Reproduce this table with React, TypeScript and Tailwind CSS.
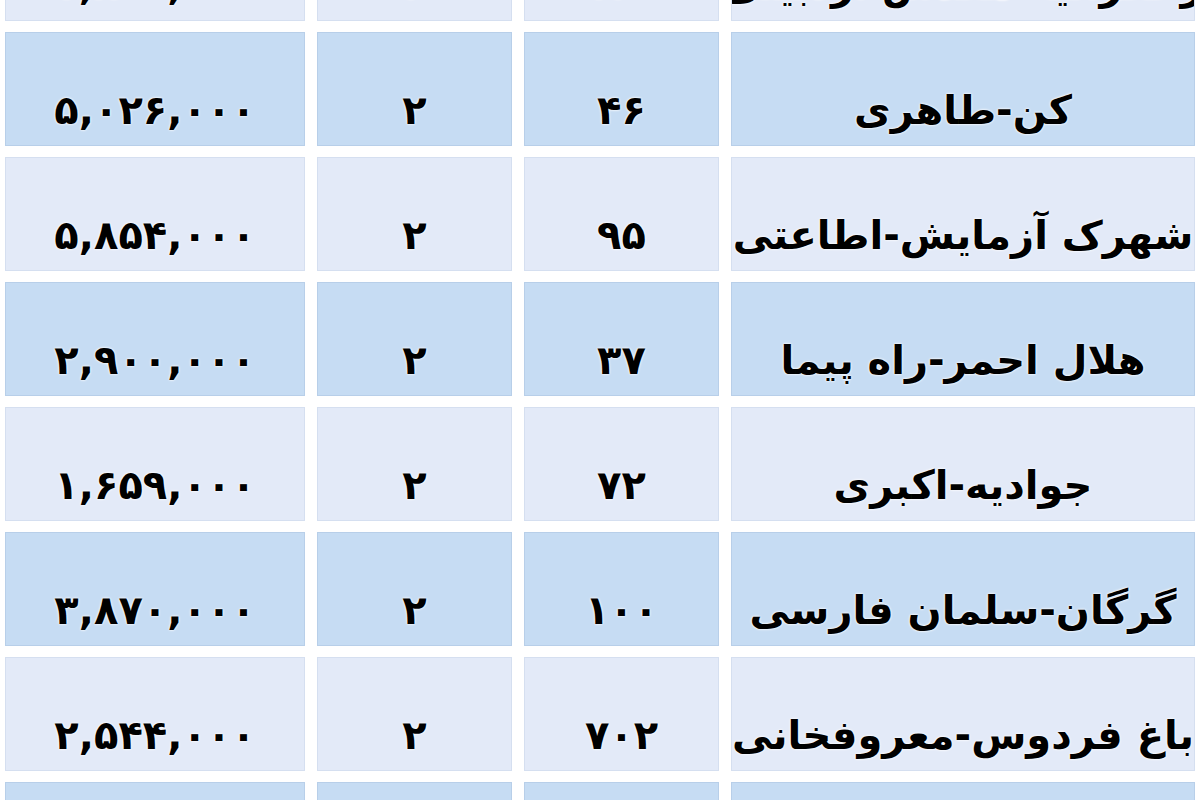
const ROWS = [
  { name: "زعفرانیه-مقدس اردبیلی", area: "۱۲۰", rooms: "۲", price: "۷,۸۰۰,۰۰۰" },
  { name: "کن-طاهری", area: "۴۶", rooms: "۲", price: "۵,۰۲۶,۰۰۰" },
  { name: "شهرک آزمایش-اطاعتی", area: "۹۵", rooms: "۲", price: "۵,۸۵۴,۰۰۰" },
  { name: "هلال احمر-راه پیما", area: "۳۷", rooms: "۲", price: "۲,۹۰۰,۰۰۰" },
  { name: "جوادیه-اکبری", area: "۷۲", rooms: "۲", price: "۱,۶۵۹,۰۰۰" },
  { name: "گرگان-سلمان فارسی", area: "۱۰۰", rooms: "۲", price: "۳,۸۷۰,۰۰۰" },
  { name: "باغ فردوس-معروفخانی", area: "۷۰۲", rooms: "۲", price: "۲,۵۴۴,۰۰۰" },
  { name: "", area: "", rooms: "", price: "" },
];

function Cell({ blue, children }: { blue: boolean; children: React.ReactNode }) {
  return (
    <div
      className={
        blue
          ? "flex h-[114px] items-center justify-center overflow-hidden whitespace-nowrap border border-[#b8cfe9] bg-[#c6dcf3] pt-[42px]"
          : "flex h-[114px] items-center justify-center overflow-hidden whitespace-nowrap border border-[#d5dff0] bg-[#e3eaf8] pt-[42px]"
      }
    >
      {children}
    </div>
  );
}

export default function App() {
  return (
    <div className="h-[800px] w-[1200px] overflow-hidden bg-white">
      <div
        dir="rtl"
        className="-mt-[93px] grid grid-cols-[464px_195px_195px_300px] gap-x-[12px] gap-y-[11px] pr-[5px] font-['DejaVu_Sans',sans-serif] text-[40px] font-bold leading-none text-black [text-shadow:0_0_3px_#fff,0_0_2px_#fff]"
      >
        {ROWS.map((r, i) => {
          const blue = i % 2 === 1;
          return [
            <Cell key={`n${i}`} blue={blue}>
              <span className="text-[40px]">{r.name}</span>
            </Cell>,
            <Cell key={`a${i}`} blue={blue}>
              {r.area}
            </Cell>,
            <Cell key={`r${i}`} blue={blue}>
              {r.rooms}
            </Cell>,
            <Cell key={`p${i}`} blue={blue}>
              <span dir="ltr">{r.price}</span>
            </Cell>,
          ];
        })}
      </div>
    </div>
  );
}
